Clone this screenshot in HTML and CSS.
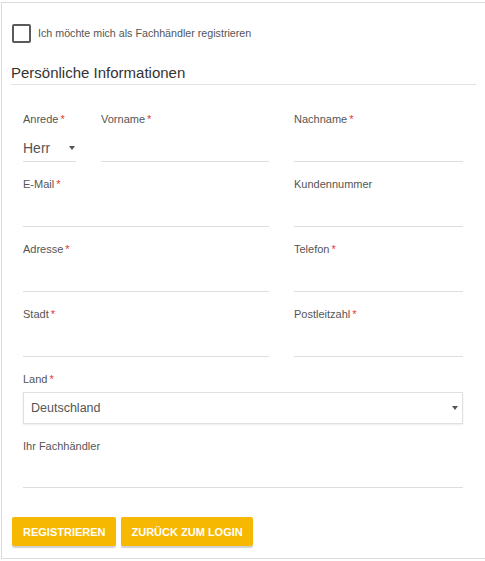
FILE: index.html
```html
<!DOCTYPE html>
<html lang="de">
<head>
<meta charset="utf-8">
<title>Registrierung</title>
<link rel="stylesheet" href="styles.css">
</head>
<body>
<div class="card">
  <label class="check">
    <span class="box"></span>
    <span class="check-text">Ich möchte mich als Fachhändler registrieren</span>
  </label>
  <h2 class="section">Persönliche Informationen</h2>
  <div class="fields">
    <div class="grid">
      <div class="pair">
        <div class="field salutation">
          <div class="label">Anrede<span class="req">*</span></div>
          <div class="input select-line"><span>Herr</span><span class="caret"></span></div>
        </div>
        <div class="field">
          <div class="label">Vorname<span class="req">*</span></div>
          <div class="input"></div>
        </div>
      </div>
      <div class="field">
        <div class="label">Nachname<span class="req">*</span></div>
        <div class="input"></div>
      </div>
      <div class="field">
        <div class="label">E-Mail<span class="req">*</span></div>
        <div class="input"></div>
      </div>
      <div class="field">
        <div class="label">Kundennummer</div>
        <div class="input"></div>
      </div>
      <div class="field">
        <div class="label">Adresse<span class="req">*</span></div>
        <div class="input"></div>
      </div>
      <div class="field">
        <div class="label">Telefon<span class="req">*</span></div>
        <div class="input"></div>
      </div>
      <div class="field">
        <div class="label">Stadt<span class="req">*</span></div>
        <div class="input"></div>
      </div>
      <div class="field">
        <div class="label">Postleitzahl<span class="req">*</span></div>
        <div class="input"></div>
      </div>
    </div>
    <div class="field wide country">
      <div class="label">Land<span class="req">*</span></div>
      <div class="selectbox"><span>Deutschland</span><span class="caret"></span></div>
    </div>
    <div class="field last">
      <div class="label">Ihr Fachhändler</div>
      <div class="input"></div>
    </div>
  </div>
  <div class="actions">
    <button class="btn">REGISTRIEREN</button>
    <button class="btn">ZURÜCK ZUM LOGIN</button>
  </div>
</div>
</body>
</html>
```

FILE: styles.css
```css
html, body {
  margin: 0;
  padding: 0;
  background: #fff;
}
body {
  font-family: "Liberation Sans", Arial, sans-serif;
  color: #555;
}
.card {
  margin: 2px 0 0 1px;
  border: 1px solid #dcdcdc;
  border-right: none;
  padding: 20px 0 11px 9px;
  box-sizing: border-box;
  height: 557px;
}
.check {
  display: flex;
  align-items: center;
  gap: 7px;
  margin-left: 1px;
  height: 20px;
}
.box {
  width: 19px;
  height: 19px;
  box-sizing: border-box;
  border: 2px solid #5a5a5a;
  border-radius: 2px;
}
.check-text {
  font-size: 10.7px;
  color: #555;
}
.section {
  margin: 20px 0 0 0;
  width: 465px;
  font-size: 15px;
  font-weight: normal;
  color: #333;
  line-height: 20px;
  padding-bottom: 1px;
  border-bottom: 1px solid #e2e2e2;
}
.fields {
  padding: 27px 0 0 12px;
  width: 440px;
}
.grid {
  display: grid;
  grid-template-columns: 246px 169px;
  column-gap: 25px;
}
.pair {
  display: grid;
  grid-template-columns: 53px 168px;
  column-gap: 25px;
}
.field {
  margin-bottom: 15px;
}
.field.last {
  margin-bottom: 0;
}
.label {
  font-size: 11px;
  line-height: 14px;
  color: #555;
  margin-bottom: 8px;
}
.last .label {
  margin-bottom: 7px;
}
.req {
  color: #e53935;
  margin-left: 2px;
}
.input {
  height: 28px;
  box-sizing: border-box;
  border-bottom: 1px solid #dedede;
}
.select-line {
  display: flex;
  align-items: center;
  justify-content: space-between;
  font-size: 14px;
  color: #555;
  padding-right: 1px;
}
.caret {
  width: 0;
  height: 0;
  border-left: 3.5px solid transparent;
  border-right: 3.5px solid transparent;
  border-top: 4px solid #555;
}
.wide .label {
  margin-bottom: 6px;
}
.selectbox {
  height: 32px;
  box-sizing: border-box;
  border: 1px solid #e0e0e0;
  box-shadow: 0 1px 2px rgba(0,0,0,0.08);
  display: flex;
  align-items: center;
  justify-content: space-between;
  padding: 0 4px 0 7px;
  font-size: 12.5px;
  color: #555;
}
.actions {
  display: flex;
  gap: 5px;
  margin: 29px 0 0 1px;
}
.btn {
  font-family: "Liberation Sans", Arial, sans-serif;
  font-weight: bold;
  font-size: 11px;
  color: #fff;
  background: #f6b800;
  border: none;
  border-radius: 2px;
  height: 29px;
  padding: 0 10px 0 11px;
  box-shadow: 0 2px 1px rgba(0,0,0,0.18);
}
```
